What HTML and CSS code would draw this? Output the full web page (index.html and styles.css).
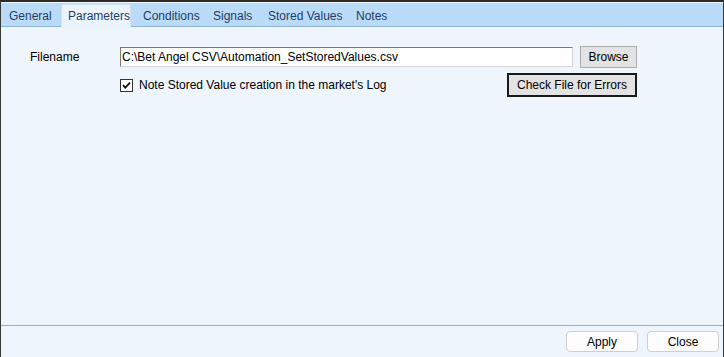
FILE: index.html
```html
<!DOCTYPE html>
<html lang="en">
<head>
  <meta charset="UTF-8">
  <title>Parameters</title>
  <link rel="stylesheet" href="styles.css">
</head>
<body>
  <div class="window">
    <div class="tabs">
      <div class="tab tab-general">General</div>
      <div class="tab tab-active">Parameters</div>
      <div class="tab tab-conditions">Conditions</div>
      <div class="tab tab-signals">Signals</div>
      <div class="tab tab-stored">Stored Values</div>
      <div class="tab tab-notes">Notes</div>
    </div>

    <div class="content">
      <div class="row">
        <label class="field-label" for="filename">Filename</label>
        <input class="text-input" id="filename" type="text" value="C:\Bet Angel CSV\Automation_SetStoredValues.csv">
        <button class="btn btn-browse">Browse</button>
      </div>
      <div class="row row-check">
        <label class="check">
          <span class="check-box">
            <svg width="11" height="11" viewBox="0 0 11 11"><path d="M2 5.2 L4.3 7.6 L9 2.6" fill="none" stroke="#111" stroke-width="1.8"/></svg>
          </span>
          Note Stored Value creation in the market's Log
        </label>
        <button class="btn btn-default">Check File for Errors</button>
      </div>
    </div>

    <div class="footer">
      <button class="btn-round">Apply</button>
      <button class="btn-round">Close</button>
    </div>
  </div>
</body>
</html>
```

FILE: styles.css
```css
* {
  margin: 0;
  padding: 0;
  box-sizing: border-box;
}

body {
  width: 724px;
  height: 357px;
  overflow: hidden;
  font-family: 'Liberation Sans', Arial, sans-serif;
  font-size: 12px;
  color: #000;
  background: #2b2b2b;
}

.window {
  width: 724px;
  height: 357px;
  border-top: 2px solid #2b2b2b;
  border-left: 1px solid #3a3a3a;
  border-right: 1px solid #3a3a3a;
  background: #eef5fd;
  display: flex;
  flex-direction: column;
}

/* Tab strip */
.tabs {
  height: 25px;
  border-top: 1px solid #f4f9fe;
  background: #badbf8;
  border-bottom: 1px solid #8fb2d2;
  display: flex;
  align-items: flex-end;
}

.tab {
  height: 22px;
  line-height: 23px;
  color: #1f3d63;
  padding-left: 8px;
  margin-bottom: -1px;
  white-space: nowrap;
}

.tab-general { width: 60px; }
.tab-conditions { margin-left: 4px; width: 70px; }
.tab-signals { width: 55px; }
.tab-stored { width: 88px; }
.tab-notes { width: 50px; }

.tab-active {
  height: 23px;
  width: 70px;
  padding-left: 6px;
  line-height: 22px;
  background: #eaf4fd;
  border: 1px solid #cfe2f3;
  border-bottom: none;
  border-radius: 2px 2px 0 0;
}

/* Form area */
.content {
  flex: 1;
  padding: 19px 0 0 29px;
}

.row {
  display: flex;
  align-items: center;
}

.field-label {
  width: 90px;
}

.text-input {
  width: 453px;
  height: 20px;
  border: 1px solid #7a7a7a;
  border-right-color: #d6d6d6;
  border-bottom-color: #d6d6d6;
  background: #fff;
  font-family: 'Liberation Sans', Arial, sans-serif;
  font-size: 12px;
  padding: 0 1px;
  color: #000;
}

.btn {
  height: 22px;
  background: #e3e3e3;
  border: 1px solid #adadad;
  font-family: 'Liberation Sans', Arial, sans-serif;
  font-size: 12px;
  color: #000;
}

.btn-browse {
  width: 57px;
  margin-left: 7px;
}

.row-check {
  margin-top: 5px;
  margin-left: 90px;
  width: 517px;
  justify-content: space-between;
}

.check {
  display: flex;
  align-items: center;
  gap: 6px;
}

.check-box {
  width: 13px;
  height: 13px;
  border: 1px solid #333;
  background: #fff;
  display: flex;
  align-items: center;
  justify-content: center;
}

.btn-default {
  width: 130px;
  height: 24px;
  border: 2px solid #1a1a1a;
}

/* Bottom bar */
.footer {
  height: 32px;
  border-top: 1px solid #8fb0c4;
  display: flex;
  justify-content: flex-end;
  align-items: flex-start;
  gap: 9px;
  padding: 5px 4px 0 0;
}

.btn-round {
  width: 72px;
  height: 21px;
  background: #fdfdfd;
  border: 1px solid #cfcfcf;
  border-radius: 4px;
  font-family: 'Liberation Sans', Arial, sans-serif;
  font-size: 12px;
  color: #000;
}
```
